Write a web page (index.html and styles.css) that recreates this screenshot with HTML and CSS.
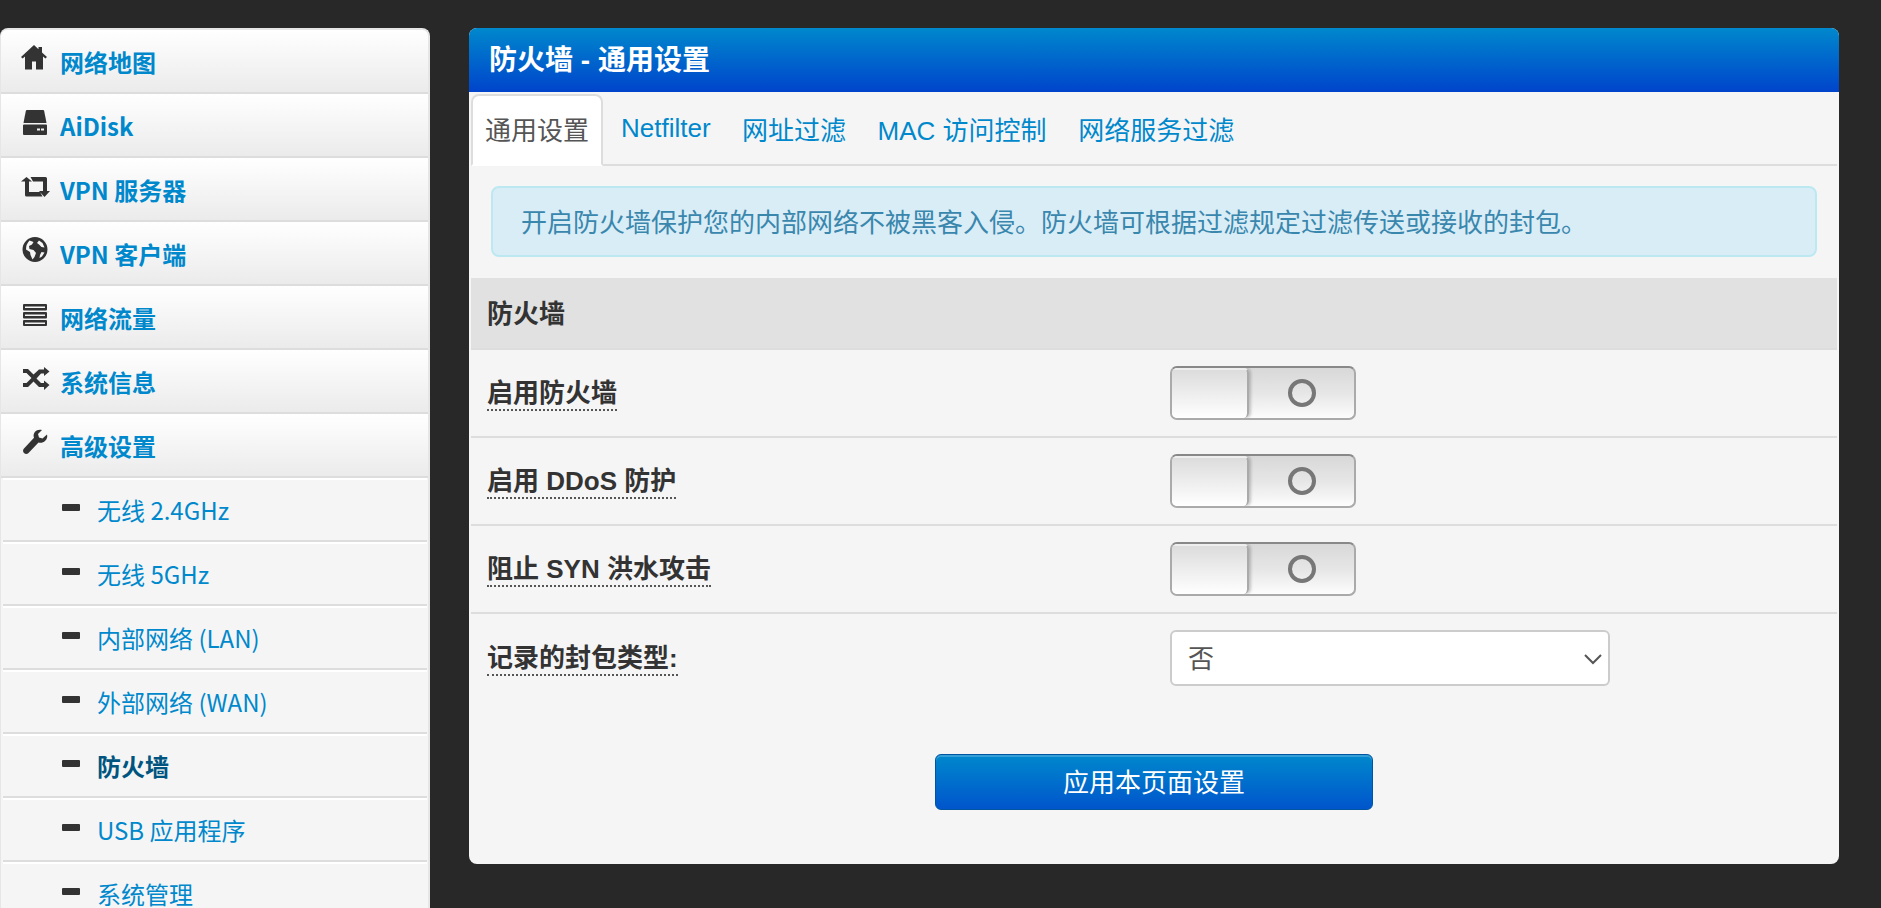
FILE: index.html
```html
<!DOCTYPE html>
<html lang="zh-CN">
<head>
<meta charset="utf-8">
<title>防火墙 - 通用设置</title>
<link rel="stylesheet" href="styles.css">
</head>
<body>
<div class="page">
  <nav class="sidebar">
    <a class="item">
      <svg class="ico" viewBox="0 0 29 28"><path d="M13 1 0 13l1.600 1.600L4 12.500v13h7v-8h4v8h7v-13l2.400 2.100L26 13l-5-4.600V3h-3.500v2.200z"/></svg>
      <span>网络地图</span>
    </a>
    <a class="item">
      <svg class="ico" viewBox="0 0 29 28"><path d="M4.800 3Q5 2 6 2h16q1 0 1.200 1L25.500 15h-23z"/><path fill-rule="evenodd" d="M3 16.500h22q1 0 1 1V26q0 1-1 1H3q-1 0-1-1v-8.500q0-1 1-1zM16 20.500v2h3v-2zm4 0v2h3v-2z"/></svg>
      <span>AiDisk</span>
    </a>
    <a class="item">
      <svg class="ico" viewBox="0 0 29 28"><path d="M0 9.500 5.500 5 11 9.500H8V20h11l2.500 4.500H5.500Q4 24.500 4 23V9.500zM9.500 5h15Q26 5 26 6.500V19h3l-5.500 6L18 19h4V9.500H12z"/></svg>
      <span>VPN 服务器</span>
    </a>
    <a class="item">
      <svg class="ico" viewBox="0 0 29 28"><path fill-rule="evenodd" d="M14 1a12.500 12.500 0 1 0 0 25 12.500 12.500 0 0 0 0-25zM8.500 4.500l4 1.500-1.500 2.500-3 1.500.5 3 4 1 2.500 3-1.500 4-2 2.500-2-4.500-.5-3-4-2.500Q5 8 8.500 4.500zM18 4.500l3.500 2.500 2 4.500-3-.5-2.500-2.500-2-1.500zM20.500 16l3 .5-2.500 4-2.500 1.500.5-3z"/></svg>
      <span>VPN 客户端</span>
    </a>
    <a class="item">
      <svg class="ico" viewBox="0 0 29 28"><path fill-rule="evenodd" d="M3 4h22q1 0 1 1v4.500q0 1-1 1H3q-1 0-1-1V5q0-1 1-1zM4 6.500V8h20V6.500zM3 12h22q1 0 1 1v4.500q0 1-1 1H3q-1 0-1-1V13q0-1 1-1zM4 14.500V16h20v-1.500zM3 20h22q1 0 1 1v4q0 1-1 1H3q-1 0-1-1v-4q0-1 1-1zM4 22.500V24h20v-1.500z"/></svg>
      <span>网络流量</span>
    </a>
    <a class="item">
      <svg class="ico" viewBox="0 0 29 28"><path d="M23 3l5.500 4.500L23 12V9.500h-3l-4.500 5 4.500 4.500h3v-2.500l5.500 4.500-5.500 5V23h-5l-5.500-5.500L7 23H2v-4h3.500l5-5-5-5H2V5h5l5.500 5.500L18 5.500h5z"/></svg>
      <span>系统信息</span>
    </a>
    <a class="item">
      <svg class="ico" viewBox="0 0 29 28"><path d="M26 6.500 21.500 10.500l-3.500-1-1-3.500L21 2c-3-.7-5.500 0-7 1.700-1.500 1.800-1.800 4-1 6L3 20.500c-1.300 1.300-1.200 3.200 0 4.500 1.300 1.300 3.200 1.300 4.500 0L17.500 14.500c2.300.7 4.800.2 6.700-1.700 1.800-1.800 2.500-4 1.800-6.300z"/></svg>
      <span>高级设置</span>
    </a>
    <a class="item sub"><svg class="minus" viewBox="0 0 18 7"><rect width="18" height="7" rx="1"/></svg><span>无线 2.4GHz</span></a>
    <a class="item sub"><svg class="minus" viewBox="0 0 18 7"><rect width="18" height="7" rx="1"/></svg><span>无线 5GHz</span></a>
    <a class="item sub"><svg class="minus" viewBox="0 0 18 7"><rect width="18" height="7" rx="1"/></svg><span>内部网络 (LAN)</span></a>
    <a class="item sub"><svg class="minus" viewBox="0 0 18 7"><rect width="18" height="7" rx="1"/></svg><span>外部网络 (WAN)</span></a>
    <a class="item sub active"><svg class="minus" viewBox="0 0 18 7"><rect width="18" height="7" rx="1"/></svg><span>防火墙</span></a>
    <a class="item sub"><svg class="minus" viewBox="0 0 18 7"><rect width="18" height="7" rx="1"/></svg><span>USB 应用程序</span></a>
    <a class="item sub"><svg class="minus" viewBox="0 0 18 7"><rect width="18" height="7" rx="1"/></svg><span>系统管理</span></a>
  </nav>

  <main class="panel">
    <h1 class="panel-head">防火墙 - 通用设置</h1>
    <div class="panel-body">
      <ul class="tabs">
        <li class="tab current">通用设置</li>
        <li class="tab">Netfilter</li>
        <li class="tab">网址过滤</li>
        <li class="tab">MAC 访问控制</li>
        <li class="tab">网络服务过滤</li>
      </ul>
      <div class="alert">开启防火墙保护您的内部网络不被黑客入侵。防火墙可根据过滤规定过滤传送或接收的封包。</div>
      <div class="section-head">防火墙</div>
      <div class="row">
        <span class="label"><span class="hint">启用防火墙</span></span>
        <div class="toggle"><div class="knob"></div><div class="off"><div class="ring"></div></div></div>
      </div>
      <div class="row">
        <span class="label"><span class="hint">启用 DDoS 防护</span></span>
        <div class="toggle"><div class="knob"></div><div class="off"><div class="ring"></div></div></div>
      </div>
      <div class="row">
        <span class="label"><span class="hint">阻止 SYN 洪水攻击</span></span>
        <div class="toggle"><div class="knob"></div><div class="off"><div class="ring"></div></div></div>
      </div>
      <div class="row last">
        <span class="label"><span class="hint">记录的封包类型:</span></span>
        <div class="select">
          <span>否</span>
          <svg class="chev" viewBox="0 0 18 11"><path d="M1 1l8 8 8-8" fill="none" stroke="#555" stroke-width="2"/></svg>
        </div>
      </div>
      <div class="actions"><button class="apply" type="button">应用本页面设置</button></div>
    </div>
  </main>
</div>
</body>
</html>
```
FILE: styles.css
```css
* { box-sizing: border-box; }
html, body { margin: 0; height: 100%; overflow: hidden; }
body {
  background: #282828;
  font-family: "Liberation Sans", "Noto Sans CJK SC", sans-serif;
  color: #333;
}
.page {
  display: flex;
  align-items: flex-start;
  padding: 28px 42px 0 0;
  gap: 39px;
}

/* Sidebar */
.sidebar {
  flex: 0 0 430px;
  background: #f5f5f5;
  border: 2px solid #e6e6e6;
  border-left-width: 1px;
  border-bottom: 0;
  border-radius: 8px 8px 0 0;
  font-family: "Noto Sans CJK SC", sans-serif;
}
.item {
  display: flex;
  align-items: center;
  height: 64px;
  padding: 0 0 0 20px;
  gap: 10px;
  font-size: 24px;
  font-weight: 700;
  color: #0088cc;
  background: linear-gradient(#fff, #ebebeb);
  border-bottom: 2px solid #ddd;
}
.item:first-child { border-radius: 6px 6px 0 0; }
.ico {
  flex: none;
  width: 29px;
  height: 28px;
  margin-top: -6px;
  fill: #333;
}
.item.sub {
  background: #f5f5f5;
  margin: 0 1px 0 2px;
  padding-left: 59px;
  gap: 17px;
  font-weight: 400;
  box-shadow: inset 0 2px 0 #fff;
}
.minus {
  flex: none;
  width: 18px;
  height: 7px;
  margin-top: -4px;
  fill: #333;
}
.item.sub.active {
  font-weight: 700;
  color: #005580;
}

/* Panel */
.panel {
  flex: 1;
  min-width: 0;
  height: 836px;
  background: #f5f5f5;
  border-radius: 8px;
  overflow: hidden;
}
.panel-head {
  margin: 0;
  height: 64px;
  padding: 0 20px 5px;
  display: flex;
  align-items: center;
  background: linear-gradient(#0088cc, #0044cc);
  color: #fff;
  font-size: 28px;
  font-weight: 700;
}
.panel-body {
  margin: 0 2px;
}
.tabs {
  list-style: none;
  margin: 0;
  padding: 2px 0 0;
  display: flex;
  height: 74px;
  border-bottom: 2px solid #ddd;
}
.tab {
  height: 72px;
  margin-right: 1.500px;
  padding: 0 13px 3px;
  display: flex;
  align-items: center;
  border: 2px solid transparent;
  border-radius: 8px 8px 0 0;
  font-size: 26px;
  color: #0088cc;
}
.tab.current {
  margin-right: 3px;
  padding: 0 12px 3px;
  color: #555;
  background: #fff;
  border-color: #ddd #ddd #fff;
}
.alert {
  margin: 20px 20px 21px;
  height: 71px;
  padding: 0 28px 3px;
  display: flex;
  align-items: center;
  background: #d9edf7;
  border: 2px solid #bce8f1;
  border-radius: 8px;
  color: #3a87ad;
  font-size: 26px;
}
.section-head {
  height: 72px;
  padding: 0 16px 3px;
  display: flex;
  align-items: center;
  background: #e1e1e1;
  border-bottom: 2px solid #ddd;
  font-size: 26px;
  font-weight: 700;
}
.row {
  display: grid;
  grid-template-columns: 683px 1fr;
  align-items: center;
  height: 88px;
  padding: 0 16px;
  border-bottom: 2px solid #ddd;
}
.row.last { border-bottom: 0; }
.label {
  font-size: 26px;
  font-weight: 700;
  margin-top: -5px;
}
.hint {
  border-bottom: 2px dotted #555;
  padding-bottom: 1px;
}

/* Toggle */
.toggle {
  display: flex;
  width: 186px;
  height: 54px;
  border: 2px solid #aaa;
  border-top-color: #888;
  border-radius: 7px;
  overflow: hidden;
  background: linear-gradient(#d8d8d8, #e6e6e6 50%, #fdfdfd);
}
.knob {
  width: 77px;
  background: linear-gradient(#dcdcdc, #fff);
  border-top: 2px solid #eee;
  border-right: 2px solid #aaa;
  border-radius: 0 5px 5px 0;
  box-shadow: 2px 0 3px rgba(0, 0, 0, .2);
}
.off {
  flex: 1;
  display: flex;
  align-items: center;
  justify-content: center;
}
.ring {
  width: 28px;
  height: 28px;
  border: 4px solid #777;
  border-radius: 50%;
}

/* Select */
.select {
  display: flex;
  align-items: center;
  justify-content: space-between;
  width: 440px;
  height: 56px;
  padding: 0 6px 3px 16px;
  background: #fff;
  border: 2px solid #ccc;
  border-radius: 6px;
  font-size: 26px;
  color: #555;
}
.chev { width: 18px; height: 11px; margin-top: 6px; }

/* Button */
.actions {
  display: flex;
  padding: 52px 0 0 464px;
}
.apply {
  width: 438px;
  height: 56px;
  padding: 0 0 3px;
  background: linear-gradient(#0088cc, #0055cc);
  border: 1px solid #0055a0;
  border-radius: 6px;
  box-shadow: inset 0 2px 0 rgba(255, 255, 255, .2);
  color: #fff;
  font: 400 26px "Liberation Sans", "Noto Sans CJK SC", sans-serif;
}
```
